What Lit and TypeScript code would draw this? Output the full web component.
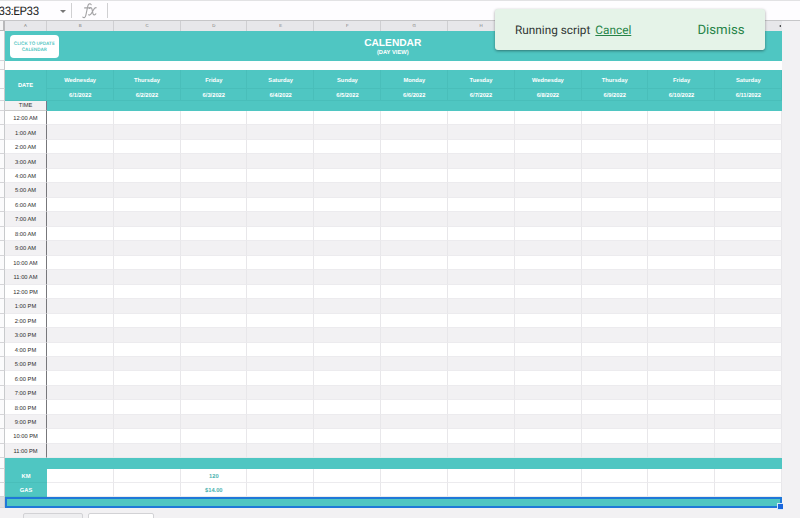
import { LitElement, html, css } from "lit";
import { customElement } from "lit/decorators.js";

const DAYS = ["Wednesday", "Thursday", "Friday", "Saturday", "Sunday", "Monday", "Tuesday", "Wednesday", "Thursday", "Friday", "Saturday"];
const LETTERS = ["A", "B", "C", "D", "E", "F", "G", "H", " ", " ", " ", ""];
const HOURS = Array.from({ length: 24 }, (_, h) => `${h % 12 || 12}:00 ${h < 12 ? "AM" : "PM"}`);

@customElement("formula-bar")
class FormulaBar extends LitElement {
  static styles = css`
    :host { display: flex; align-items: center; box-sizing: border-box; height: 21px; background: #fefdff; border-top: 1px solid #e2e2e4; border-bottom: 1px solid #c6c6c8; }
    .name { width: 60px; font: 11.7px/20px Roboto, sans-serif; color: #222; white-space: nowrap; margin-left: -1.5px; letter-spacing: -0.4px; text-rendering: geometricPrecision; }
    .arrow { width: 0; border: 3px solid transparent; border-top: 3.5px solid #777; border-bottom: 0; margin: 2px 0 0 1px; }
    .rule { width: 1px; height: 15px; background: #d0d0d2; margin-left: 5px; }
    .fx { width: 15px; height: 16px; margin-left: 10px; }
    .fx + .rule { margin-left: 10.5px; }
  `;
  render() {
    return html`<span class="name">33:EP33</span><i class="arrow"></i><i class="rule"></i>
      <svg class="fx" viewBox="0 0 15 16" fill="none" stroke="#a3a3a5" stroke-width="1.1" stroke-linecap="round">
        <path d="M9.2 1.7C8.4 .3 6.4 .4 5.8 3.1L3.8 12.3C3.3 14.6 1.9 15.1 .8 14.1M2.6 4.9H8"/>
        <path d="M7.4 5.5C8.9 3.9 9.7 4.8 10.1 6.7L10.9 10.4C11.3 12.4 12.7 12.2 13.8 10.8M14.2 4.7C12.6 4.1 11.8 6.1 10.5 8.5C9.2 10.9 8.1 12.8 6.6 11.8"/>
      </svg><i class="rule"></i>`;
  }
}

@customElement("calendar-sheet")
class CalendarSheet extends LitElement {
  static styles = css`
    :host { display: block; width: 782px; font: 5.75px/1 "Liberation Sans", Arial, sans-serif; color: #2c2c2c; background: #fff; text-rendering: geometricPrecision; }
    .row { display: grid; grid-template-columns: 4.5px 42.5px repeat(11, 1fr); box-sizing: border-box; }
    .row > * { box-sizing: border-box; display: flex; align-items: center; justify-content: center; border-right: 1px solid #e8e7ea; border-bottom: 1px solid #ecebee; white-space: nowrap; min-width: 0; padding: 4.5px 0 0 .5px; }
    .row > .gutter { background: #fbfbfc; border-right-color: #c8cacc; border-bottom-color: #d5d5d8; padding: 0; }
    .letters { height: 10px; font-size: 4.4px; color: #777; background: #e7e7ea; }
    .letters > * { border-right-color: #cfcfd2; border-bottom: 0; padding-top: 0; }
    .row.letters > span { padding-top: .5px; }
    .letters > .gutter { background: #f4f4f5; border-right: 2px solid #b8b8ba; border-bottom: 1px solid #b8b8ba; }
    .letters > :last-child { justify-content: flex-end; padding-right: 1px; border: 0; }
    .mark { width: 0; border: 1.5px solid transparent; border-right: 2px solid #222; border-left: 0; }
    .title { height: 30px; color: #fff; }
    .title > .banner { grid-column: 2 / -1; position: relative; background: #4fc6c2; border: 0; flex-direction: column; padding: 4px 1px 0 0; font-weight: 700; }
    .title h1 { margin: 0 0 1.5px; font-size: 10.2px; line-height: 10px; }
    .update { position: absolute; left: 5.5px; top: 4px; width: 48.5px; height: 23px; box-sizing: border-box; border-radius: 4px; background: #fff; color: #4fc6c2; font: 600 4.6px/5.2px Inter, sans-serif; text-align: center; padding-top: 7.4px; }
    .gap { height: 9px; }
    .gap > * { padding: 0; }
    .gap > .blank { grid-column: 2 / -1; border: 0; padding: 0; }
    .head { grid-template-rows: 19px 11.5px 10.5px; color: #fff; font-weight: 700; }
    .head > .teal { background: #4fc6c2; border-color: #49beba; }
    .head > .day { padding-top: 5px; }
    .head > .date { grid-row: 1 / 3; grid-column: 2; padding-top: 5px; }
    .head > .time { background: #f2f1f3; color: #333; font-weight: 400; border-right-color: #778; border-bottom-color: #ccc; padding-top: 3.5px; }
    .head > .tail { border-right: 0; border-bottom: 0; }
    .hours { display: grid; height: 347.3px; grid-template-rows: repeat(24, 1fr); }
    .hour:nth-child(even) { background: #f2f1f3; }
    .hour > .label { border-right-color: #77777b; }
    .band { height: 10.5px; }
    .band > .fill { grid-column: 2 / -1; background: #4fc6c2; border: 0; padding: 0; }
    .metric { height: 14.2px; color: #4fb5b2; font-weight: 700; }
    .metric > .label { background: #4fc6c2; color: #fff; border-right: 0; border-bottom-color: #49beba; }
    .selected { height: 11px; }
    .selected > .gutter { background: #dddde0; }
    .selected > .fill { position: relative; border: 2px solid #1f78d8; }
    .handle { position: absolute; right: -3px; bottom: -4px; width: 5px; height: 5px; background: #1a66dd; border: 1px solid #d6e8fb; border-right-width: 0; }
  `;
  render() {
    const g = html`<span class="gutter"></span>`;
    return html`
      <div class="row letters">${g}${LETTERS.map(l => html`<span>${l || html`<i class="mark"></i>`}</span>`)}</div>
      <div class="row title">${g}<div class="banner"><h1>CALENDAR</h1><span>(DAY VIEW)</span><div class="update">CLICK TO UPDATE<br>CALENDAR</div></div></div>
      <div class="row gap">${g}<span class="blank"></span></div>
      <div class="row head">
        ${g}<span class="teal date">DATE</span>${DAYS.map(d => html`<span class="teal day">${d}</span>`)}
        ${g}${DAYS.map((_, i) => html`<span class="teal">6/${i + 1}/2022</span>`)}
        ${g}<span class="time">TIME</span>${DAYS.map(() => html`<span class="teal tail"></span>`)}
      </div>
      <div class="hours">${HOURS.map(h => html`<div class="row hour">${g}<span class="label">${h}</span>${DAYS.map(() => html`<span></span>`)}</div>`)}</div>
      <div class="row band">${g}<span class="fill"></span></div>
      ${[["KM", "120"], ["GAS", "$14.00"]].map(([name, value]) => html`<div class="row metric">${g}<span class="label">${name}</span>${DAYS.map((_, i) => html`<span>${i === 2 ? value : ""}</span>`)}</div>`)}
      <div class="row band selected">${g}<span class="fill"><i class="handle"></i></span></div>`;
  }
}

@customElement("script-toast")
class ScriptToast extends LitElement {
  static styles = css`
    :host { display: flex; align-items: center; box-sizing: border-box; width: 269.5px; height: 40.5px; padding: 1px 20px 0; border-radius: 3px; background: #e5f3e8; box-shadow: 0 1px 3px rgba(0, 0, 0, .4); font: 400 11.8px/16px Roboto, sans-serif; color: #303633; white-space: nowrap; text-rendering: geometricPrecision; }
    .cancel { margin-left: 5px; color: #278448; text-decoration: underline; }
    .dismiss { margin-left: auto; color: #278448; font-size: 13.2px; padding-top: 2px; }
  `;
  render() {
    return html`<span>Running script</span><span class="cancel">Cancel</span><span class="dismiss">Dismiss</span>`;
  }
}

@customElement("app-root")
class AppRoot extends LitElement {
  static styles = css`
    :host { display: block; position: relative; width: 800px; height: 518px; overflow: hidden; background: #f2f1f3; }
    .toast { position: absolute; left: 495px; top: 9px; }
    .tabs { display: flex; gap: 5px; padding: 5px 0 0 23px; }
    .tab { box-sizing: border-box; width: 60px; height: 12px; border: 1px solid #d2d2d5; border-radius: 2px 2px 0 0; background: #eeeef0; }
    .tab.active { width: 66px; background: #fff; }
  `;
  render() {
    return html`<formula-bar></formula-bar><calendar-sheet></calendar-sheet>
      <div class="tabs"><div class="tab"></div><div class="tab active"></div></div>
      <script-toast class="toast"></script-toast>`;
  }
}
